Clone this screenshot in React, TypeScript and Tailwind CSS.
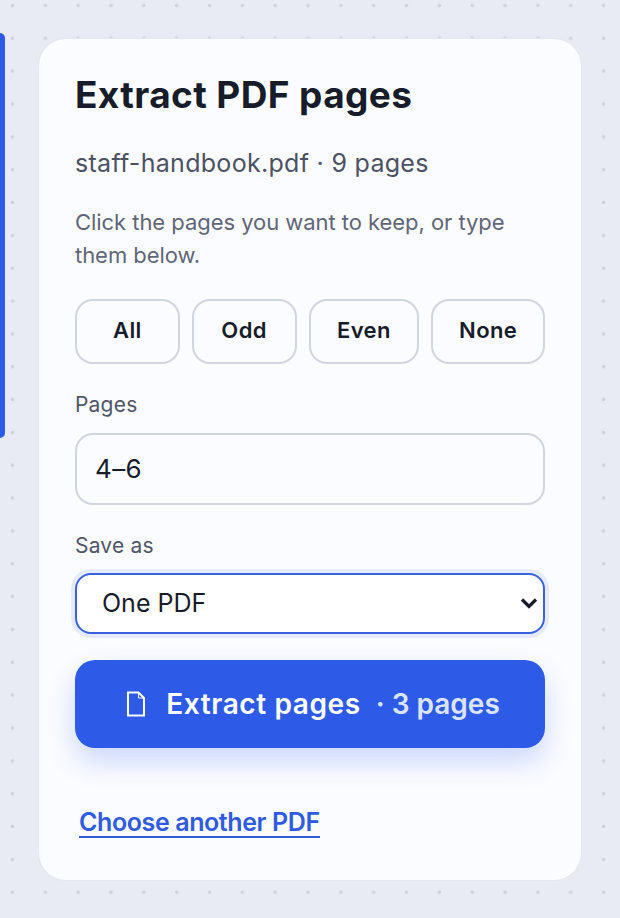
import { useState } from 'react';

const presets = [
    { label: 'All', width: 'w-[105px]' },
    { label: 'Odd', width: 'w-[105px]' },
    { label: 'Even', width: 'w-[111px]' },
    { label: 'None', width: 'w-[114px]' },
];

const App = () => {
    const [pages, setPages] = useState('4–6');
    const [mode, setMode] = useState('one');

    return (
        <div className="flex h-[918px] w-[620px] overflow-hidden bg-[#e8ebf3] bg-[radial-gradient(circle,#cfd3de_1.6px,transparent_2.2px)] bg-[size:32.85px_32.85px] bg-[position:-4px_-11px] font-['Inter','Liberation_Sans',sans-serif]">
            {/* Edge of the page strip */}
            <div className="mt-[33px] h-[405px] w-[5px] shrink-0 rounded-r-lg bg-[#2d5be8]" />

            {/* Main card */}
            <div className="mt-[38px] ml-[33px] flex h-[843px] w-[544px] shrink-0 flex-col rounded-[28px] border border-[#e3e6ed] bg-[#fbfcff] px-[36px] pt-[32px]">
                <h1 className="text-[37px] leading-[48px] font-bold tracking-[0.4px] text-[#171c2b]">
                    Extract PDF pages
                </h1>
                <p className="mt-[26px] text-[25px] leading-[36px] tracking-[0.3px] text-[#4b5263]">
                    staff-handbook.pdf · 9 pages
                </p>
                <p className="mt-[25px] text-[22px] leading-[33px] tracking-[-0.05px] text-[#5f6679]">
                    Click the pages you want to keep, or type them below.
                </p>

                <div className="mt-[27px] flex gap-[12px]">
                    {presets.map((preset) => (
                        <button
                            key={preset.label}
                            type="button"
                            className={`h-[65px] ${preset.width} rounded-[18px] border-2 border-[#d0d5e0] pb-[2px] text-[22px] font-semibold tracking-[0.4px] text-[#171c2b]`}
                        >
                            {preset.label}
                        </button>
                    ))}
                </div>

                <label
                    htmlFor="pages"
                    className="mt-[26px] text-[21px] leading-[30px] tracking-[0.2px] text-[#4f5669]"
                >
                    Pages
                </label>
                <input
                    id="pages"
                    value={pages}
                    onChange={(e) => setPages(e.target.value)}
                    className="mt-[13px] h-[72px] w-full rounded-[18px] border-2 border-[#d0d5e0] bg-[#fbfcff] px-[18px] pb-[2px] text-[26px] tracking-[0.4px] text-[#171c2b] outline-none"
                />

                <label
                    htmlFor="save-as"
                    className="mt-[26px] text-[21px] leading-[30px] tracking-[0.2px] text-[#4f5669]"
                >
                    Save as
                </label>
                <div className="relative mt-[12px]">
                    <select
                        id="save-as"
                        value={mode}
                        onChange={(e) => setMode(e.target.value)}
                        className="h-[61px] w-full appearance-none rounded-[16px] border-2 border-[#3a62e0] bg-white pl-[25px] text-[25px] text-[#171c2b] shadow-[0_0_0_4px_#e6ebfb] outline-none"
                    >
                        <option value="one">One PDF</option>
                        <option value="each">Separate PDFs</option>
                    </select>
                    <svg
                        className="pointer-events-none absolute top-[24px] right-[7px] text-[#171c2b]"
                        width="18"
                        height="12"
                        viewBox="0 0 18 12"
                        fill="none"
                        stroke="currentColor"
                        strokeWidth="3.200"
                    >
                        <path d="M2 2.500l7 7 7-7" />
                    </svg>
                </div>

                <button
                    type="button"
                    className="mt-[26px] flex h-[88px] w-full items-center justify-center rounded-[20px] bg-[#2d5be8] pl-[6px] text-[28px] font-semibold text-white shadow-[0_14px_28px_rgba(45,91,232,0.22)]"
                >
                    <svg
                        className="mr-[20px]"
                        width="20"
                        height="26"
                        viewBox="0 0 20 26"
                        fill="none"
                        stroke="currentColor"
                        strokeWidth="2"
                    >
                        <path d="M2 1.500h10.500L18 7v17.500H2z" />
                        <path d="M12.500 1.500V7H18" strokeWidth="1" />
                    </svg>
                    <span className="tracking-[0.6px]">Extract pages</span>
                    <span className="ml-[15px] text-[#dce4fd]">· 3 pages</span>
                </button>

                <a
                    href="#"
                    className="mt-[60px] ml-[4px] w-fit border-b-2 border-[#2f5be0] text-[25px] leading-[28px] font-semibold tracking-[-0.4px] text-[#2f5be0]"
                >
                    Choose another PDF
                </a>
            </div>
        </div>
    );
};

export default App;
